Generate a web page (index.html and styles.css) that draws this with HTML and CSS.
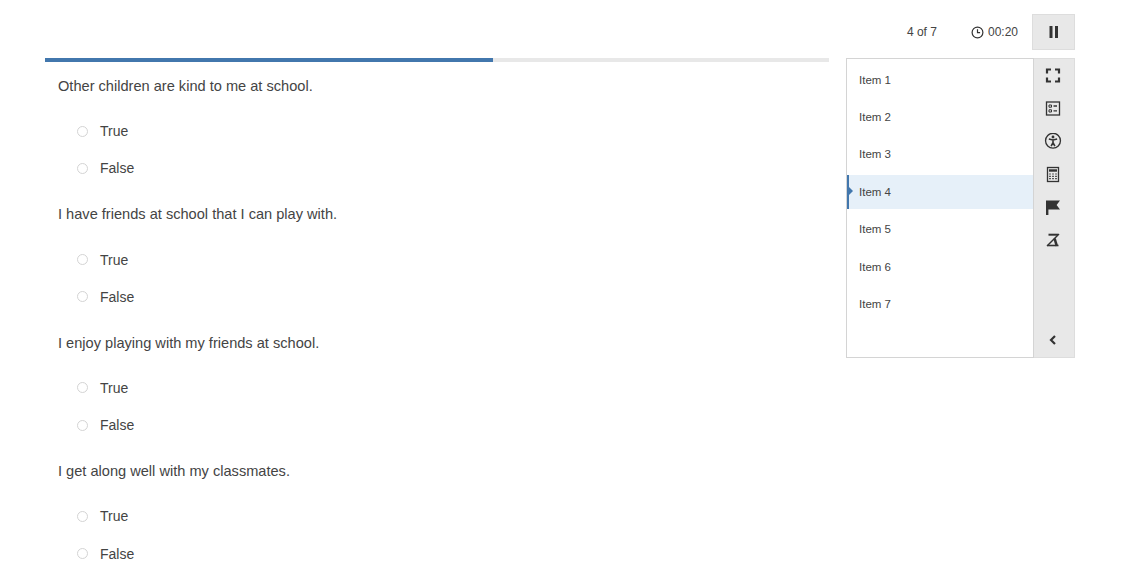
FILE: index.html

```html
<!DOCTYPE html>
<html lang="en">
<head>
<meta charset="utf-8"/>
<title>Assessment</title>
<link rel="stylesheet" href="styles.css">
</head>
<body>
<div class="topbar">
  <span class="count">4 of 7</span>
  <span class="timer">
    <svg width="13" height="13" viewBox="0 0 13 13" fill="none" stroke="#333" stroke-width="1.2"><circle cx="6.5" cy="6.5" r="5.4"/><path d="M6.5 3.2v3.5h2.6"/></svg>
    00:20
  </span>
  <button class="pause"><svg width="10" height="12" viewBox="0 0 10 12" fill="#333"><rect x="0.5" width="3" height="12"/><rect x="6" width="3" height="12"/></svg></button>
</div>
<div class="main">
  <div class="content">
    <div class="progress"><div class="progress-fill" style="width: 57.14%"></div></div>
    <div class="question">
      <p class="stem">Other children are kind to me at school.</p>
      <div class="option"><span class="radio"></span>True</div>
      <div class="option"><span class="radio"></span>False</div>
    </div>
    <div class="question">
      <p class="stem">I have friends at school that I can play with.</p>
      <div class="option"><span class="radio"></span>True</div>
      <div class="option"><span class="radio"></span>False</div>
    </div>
    <div class="question">
      <p class="stem">I enjoy playing with my friends at school.</p>
      <div class="option"><span class="radio"></span>True</div>
      <div class="option"><span class="radio"></span>False</div>
    </div>
    <div class="question">
      <p class="stem">I get along well with my classmates.</p>
      <div class="option"><span class="radio"></span>True</div>
      <div class="option"><span class="radio"></span>False</div>
    </div>
  </div>
  <div class="side">
    <ul class="items">
      <li>Item 1</li>
      <li>Item 2</li>
      <li>Item 3</li>
      <li class="active">Item 4</li>
      <li>Item 5</li>
      <li>Item 6</li>
      <li>Item 7</li>
    </ul>
    <div class="tools">
      <svg width="16" height="16" viewBox="0 0 16 16" fill="none" stroke="#333" stroke-width="2.2"><path d="M2 6V2h4M10 2h4v4M14 10v4h-4M6 14H2v-4"/></svg>
      <svg width="16" height="16" viewBox="0 0 16 16" fill="none" stroke="#333"><rect x="1.5" y="1.5" width="13" height="13" stroke-width="1.3"/><path d="M4 4.5h2.5v2.2H4zM4 9.3h2.5v2.2H4z" stroke-width="1"/><path d="M8.5 5.5H12M8.5 10.4H12" stroke-width="1.4"/></svg>
      <svg width="18" height="18" viewBox="0 0.8 18 18" fill="none" stroke="#333"><circle cx="9" cy="9" r="7.9" stroke-width="1.4"/><circle cx="9" cy="5" r="1.5" fill="#333" stroke="none"/><path d="M4.6 7.2 9 8.2l4.4-1M9 8v3.2M9 11l-2 3.8M9 11l2 3.8" stroke-width="1.7"/></svg>
      <svg width="14" height="16" viewBox="0 0 14 16" fill="none" stroke="#333"><rect x="1.5" y="1" width="11" height="14" stroke-width="1.3"/><rect x="3" y="2.8" width="8" height="2.4" fill="#333" stroke="none"/><path d="M3.2 7.5h7.6M3.2 9.8h7.6M3.2 12.2h7.6" stroke-width="1.2" stroke-dasharray="1.6 1.4"/></svg>
      <svg width="16" height="16" viewBox="0 0 16 16" fill="#333"><path d="M1 1h14l-3.4 4.4L15 10H3.4v5.6H1z"/></svg>
      <svg width="14" height="14" viewBox="0 1 14 14" fill="none" stroke="#333"><path d="M2.5 2.2h9.5" stroke-width="2"/><path d="M1 13.5 13 1.5" stroke-width="1.5"/><path d="M8.6 6 10.8 13.5" stroke-width="2.6"/><path d="M1.5 13h11" stroke-width="1.6"/></svg>
      <svg class="collapse" width="10" height="10" viewBox="0 0 10 10" fill="none" stroke="#333" stroke-width="2.2"><path d="M7 1 3 5l4 4"/></svg>
    </div>
  </div>
</div>
</body>
</html>
```

FILE: styles.css

```css
html, body { margin: 0; height: 582px; overflow: hidden; }
body { font-family: "Liberation Sans", Arial, sans-serif; color: #444; background: #fff; }

.topbar { display: flex; justify-content: flex-end; align-items: center; height: 36px; padding: 14px 58px 8px 0; font-size: 12px; }
.count { margin-right: 34px; }
.timer { display: flex; align-items: center; gap: 4px; margin-right: 14px; }
.pause { width: 43px; height: 36px; padding: 0; background: #e8e8e8; border: 1px solid #ddd; display: flex; align-items: center; justify-content: center; }

.main { display: flex; align-items: flex-start; padding-left: 45px; }
.content { width: 784px; margin-right: 17px; }
.progress { height: 4px; background: #e8e8e8; }
.progress-fill { height: 4px; background: #4277ad; }

.question { padding-left: 13px; font-size: 14px; }
.stem { margin: 0 0 27.2px; height: 18px; line-height: 18px; padding-top: 15px; font-size: 14.6px; }
.option { display: flex; align-items: center; height: 18px; line-height: 18px; margin-bottom: 19.2px; padding-left: 19px; }
.question .option:last-child { margin-bottom: 13px; }
.radio { width: 9px; height: 9px; border: 1px solid #d4d4d4; border-radius: 50%; margin-right: 12px; }

.side { display: flex; height: 300px; }
.items { list-style: none; margin: 0; padding: 3.6px 0 0; width: 186px; height: 294.4px; border: 1px solid #d4d4d4; font-size: 11.5px; }
.items li { height: 34px; line-height: 34px; margin-bottom: 3.4px; padding-left: 12px; }
.items .active { position: relative; background: #e6f0f9; border-left: 2px solid #4277ad; padding-left: 10px; }
.items .active::after { content: ""; position: absolute; left: 0; top: 12px; border: 4px solid transparent; border-left-color: #4277ad; }

.tools { display: flex; flex-direction: column; align-items: center; width: 37px; height: 290px; background: #e8e8e8; border: 1px solid #ddd; border-left: none; padding: 8px 3px 0 0; }
.tools svg { height: 17px; margin-bottom: 16px; }
.tools .collapse { margin-top: auto; height: 10px; margin-bottom: 12px; }
```
